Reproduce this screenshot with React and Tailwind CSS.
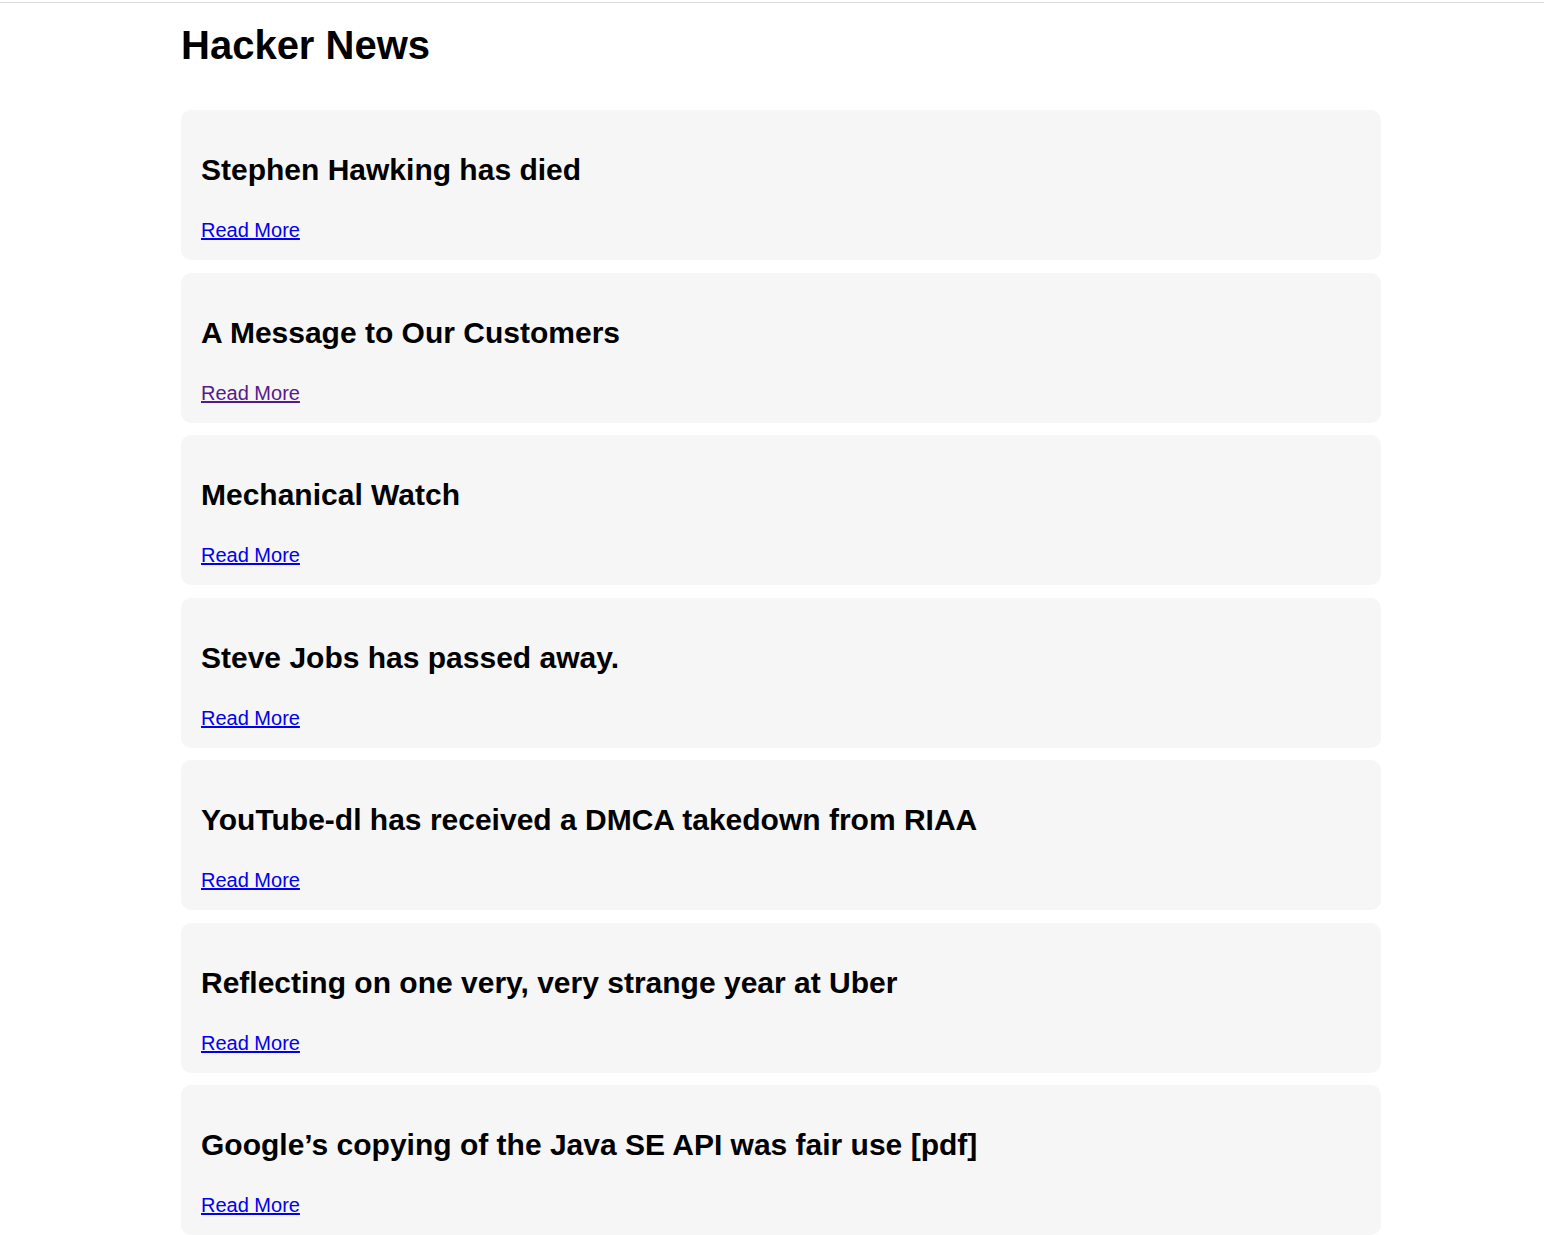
import React from "react";

const stories = [
  { title: "Stephen Hawking has died" },
  { title: "A Message to Our Customers", visited: true },
  { title: "Mechanical Watch" },
  { title: "Steve Jobs has passed away." },
  { title: "YouTube-dl has received a DMCA takedown from RIAA" },
  { title: "Reflecting on one very, very strange year at Uber" },
  { title: "Google’s copying of the Java SE API was fair use [pdf]" },
];

const StoryCard = ({ story }) => (
  <div className="bg-[#f6f6f6] rounded-[10px] px-5 pt-[43px] pb-[18px] h-[150px] mb-[12.5px]">
    <h2 className="text-[30px] leading-[34px] font-bold text-black mb-[32px]">
      {story.title}
    </h2>
    <a
      href="#"
      className={`text-[20px] leading-[23px] underline ${story.visited ? "text-[#551a8b]" : "text-[#0000ee]"}`}
    >
      Read More
    </a>
  </div>
);

export default function App() {
  return (
    <div className="min-h-screen bg-white font-['Liberation_Sans',Arial,sans-serif] text-black">
      <div className="h-[2px]"></div>
      <div className="border-t border-[#dcdcdc]"></div>
      <div className="w-[1200px] ml-[181px]">
        <h1 className="text-[40px] leading-[46px] font-bold mt-[19px] mb-[42px]">
          Hacker News
        </h1>
        <div>
          {stories.map((s, i) => (
            <StoryCard key={i} story={s} />
          ))}
        </div>
      </div>
    </div>
  );
}
